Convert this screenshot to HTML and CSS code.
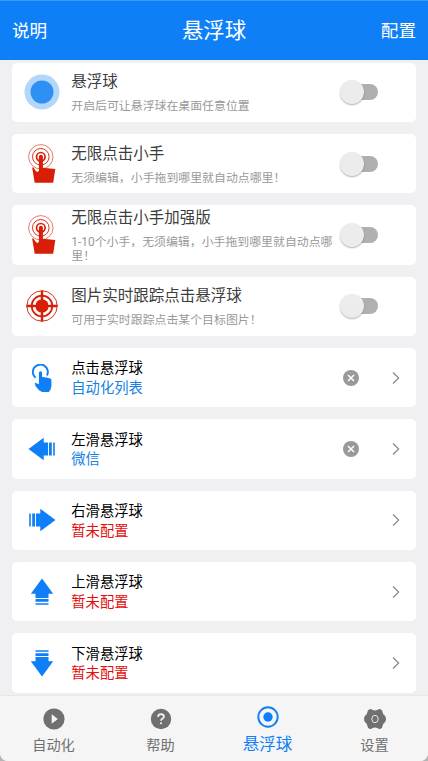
FILE: index.html
```html
<!DOCTYPE html>
<html lang="zh-CN">
<head>
<meta charset="utf-8">
<title>悬浮球</title>
<link rel="stylesheet" href="styles.css">
</head>
<body>
<svg class="defs" width="0" height="0">
  <symbol id="tap" viewBox="0 0 36 42">
    <g fill="none" stroke="#d81e06">
      <circle cx="16.800" cy="13.800" r="12.200" stroke-width=".6"/>
      <circle cx="16.800" cy="13.800" r="8.300" stroke-width=".9"/>
      <circle cx="16.800" cy="13.800" r="4.300" stroke-width="1.700"/>
    </g>
    <path d="M14.900 13.800a2 2 0 0 1 4 0V24.800L31.300 26 29.200 39.800H10.700L8.300 25.500q-.3-1.400 1-1.200l2 3q2.500 3.300 3.600.3z" fill="#d81e06"/>
  </symbol>
  <symbol id="arrow" viewBox="0 0 28 24">
    <path d="M.5 12 15.700 .8V5.500h4.300V18.500h-4.300v4.700zM21 5.500h2.800v13H21zM25.200 5.500h1.600v13h-1.600z" fill="#0e7ff7"/>
  </symbol>
  <symbol id="clear" viewBox="0 0 16 16">
    <circle cx="8" cy="8" r="8" fill="#999"/>
    <path d="M5 5l6 6M11 5l-6 6" stroke="#fff" stroke-width="1.500"/>
  </symbol>
  <symbol id="chevron" viewBox="0 0 8 12">
    <path d="M1 .5 6.700 6 1 11.500" fill="none" stroke="#888" stroke-width="1.200"/>
  </symbol>
</svg>
<div class="app">
  <header class="bar"><span class="side">说明</span><h1>悬浮球</h1><span class="side right">配置</span></header>
  <main class="list">
    <section class="card">
      <div class="icon"><svg width="36" height="36" viewBox="0 0 36 36"><circle cx="18" cy="18" r="17.500" fill="#b3d6fb"/><circle cx="18" cy="18" r="11.500" fill="#2e90f5"/></svg></div>
      <div class="text"><div class="title">悬浮球</div><div class="desc">开启后可让悬浮球在桌面任意位置</div></div>
      <div class="switch"></div>
    </section>
    <section class="card">
      <div class="icon"><svg width="36" height="42"><use href="#tap"/></svg></div>
      <div class="text"><div class="title">无限点击小手</div><div class="desc">无须编辑，小手拖到哪里就自动点哪里！</div></div>
      <div class="switch"></div>
    </section>
    <section class="card">
      <div class="icon"><svg width="36" height="42"><use href="#tap"/></svg></div>
      <div class="text"><div class="title">无限点击小手加强版</div><div class="desc">1-10个小手，无须编辑，小手拖到哪里就自动点哪里！</div></div>
      <div class="switch"></div>
    </section>
    <section class="card">
      <div class="icon"><svg width="32" height="32" viewBox="0 0 32 32">
        <g fill="none" stroke="#d81e06"><circle cx="16" cy="16" r="15.200" stroke-width=".9"/><circle cx="16" cy="16" r="10.300" stroke-width="1.800"/><path d="M16 .5v31M.5 16h31" stroke-width="2.400"/></g>
        <circle cx="16" cy="16" r="7.600" fill="#fff"/><circle cx="16" cy="16" r="6.700" fill="#d81e06"/><path d="M16 6v20M6 16h20" stroke="#d81e06" stroke-width="2.200"/></svg></div>
      <div class="text"><div class="title">图片实时跟踪点击悬浮球</div><div class="desc">可用于实时跟踪点击某个目标图片！</div></div>
      <div class="switch"></div>
    </section>
    <section class="card">
      <div class="icon"><svg width="20" height="28" viewBox="0 0 20 28"><path d="M3.500 13.800A7.500 7.500 0 1 1 15 11.500" fill="none" stroke="#0e7ff7" stroke-width="1.900"/><path d="M6.900 9q0-1.700 1.600-1.700T10.100 9v4.300l1.400-.6 1.500 1 1.600-.5 1.500 1.100 1.400-.3 1.900 1.500v6.500q-.1 3.800-2.500 6h-6.800Q6.300 26.500 3.500 22l-.8-3.600 4.200 1.800z" fill="#0e7ff7"/></svg></div>
      <div class="text"><div class="name">点击悬浮球</div><div class="value">自动化列表</div></div>
      <svg class="clear"><use href="#clear"/></svg><svg class="chevron"><use href="#chevron"/></svg>
    </section>
    <section class="card">
      <div class="icon"><svg class="arrow"><use href="#arrow"/></svg></div>
      <div class="text"><div class="name">左滑悬浮球</div><div class="value">微信</div></div>
      <svg class="clear"><use href="#clear"/></svg><svg class="chevron"><use href="#chevron"/></svg>
    </section>
    <section class="card">
      <div class="icon"><svg class="arrow to-right"><use href="#arrow"/></svg></div>
      <div class="text"><div class="name">右滑悬浮球</div><div class="value unset">暂未配置</div></div>
      <svg class="chevron"><use href="#chevron"/></svg>
    </section>
    <section class="card">
      <div class="icon"><svg class="arrow to-top"><use href="#arrow"/></svg></div>
      <div class="text"><div class="name">上滑悬浮球</div><div class="value unset">暂未配置</div></div>
      <svg class="chevron"><use href="#chevron"/></svg>
    </section>
    <section class="card">
      <div class="icon"><svg class="arrow to-bottom"><use href="#arrow"/></svg></div>
      <div class="text"><div class="name">下滑悬浮球</div><div class="value unset">暂未配置</div></div>
      <svg class="chevron"><use href="#chevron"/></svg>
    </section>
  </main>
  <nav class="tabs">
    <div class="tab"><svg width="22" height="22" viewBox="0 0 22 22"><circle cx="11" cy="11" r="10.600" fill="#707070"/><path d="M8.700 6.300v9.400l6.100-4.700z" fill="#f5f5f5"/></svg><span>自动化</span></div>
    <div class="tab"><svg width="22" height="22" viewBox="0 0 22 22"><circle cx="11" cy="11" r="10.200" fill="#707070"/><path d="M8 8.900q.2-2.700 3-2.700t2.900 2.400q0 1.300-1.600 2.200-1.300.8-1.300 2" fill="none" stroke="#f5f5f5" stroke-width="1.700"/><circle cx="11" cy="15.200" r="1.050" fill="#f5f5f5"/></svg><span>帮助</span></div>
    <div class="tab active"><svg width="22" height="22" viewBox="0 0 22 22"><circle cx="11" cy="11" r="9.700" fill="none" stroke="#0e7ff7" stroke-width="1.900"/><circle cx="11" cy="11" r="4.700" fill="#0e7ff7"/></svg><span>悬浮球</span></div>
    <div class="tab"><svg width="22" height="22" viewBox="0 0 22 22"><path d="M5.500 1.300Q7 .6 8.300 1.700q2.700 1.600 5.400 0Q15 .6 16.500 1.300 18.500 2 18.700 4.500q.3 1.900 2 3Q22 8.800 22 11t-1.300 3.500q-1.700 1.100-2 3-.2 2.500-2.200 3.200-1.500.7-2.800-.4-2.700-1.600-5.400 0-1.300 1.100-2.800.4-2-.7-2.200-3.200-.3-1.900-2-3Q0 13.200 0 11t1.300-3.500q1.700-1.100 2-3Q3.500 2 5.500 1.300z" fill="#707070"/><ellipse cx="11" cy="11" rx="3.200" ry="3.700" fill="none" stroke="#e8e8e8" stroke-width="1"/></svg><span>设置</span></div>
  </nav>
</div>
</body>
</html>
```

FILE: styles.css
```css
* { box-sizing: border-box; }
body {
  margin: 0;
  background: #b5b5b5;
  font-family: Roboto, "Noto Sans CJK SC", sans-serif;
}
.defs { display: block; }
.app {
  display: flex;
  flex-direction: column;
  height: 761px;
  overflow: hidden;
  background: #f0f0f3;
  border-radius: 0 0 8px 8px;
}
.bar {
  flex: none;
  display: flex;
  align-items: center;
  justify-content: space-between;
  height: 60px;
  padding: 0 12px 2px;
  color: #fff;
  background: #0e7ff7;
  border-top: 1px solid #359af9;
  font-family: "Noto Sans CJK SC", sans-serif;
}
.bar h1 { margin: 0; font-size: 21.400px; font-weight: 400; line-height: 28px; padding-bottom: 2px; }
.side { width: 80px; font-size: 17.600px; }
.right { text-align: right; }
.list {
  flex: 1;
  min-height: 0;
  overflow: hidden;
  display: flex;
  flex-direction: column;
  gap: 12px;
  padding: 2.600px 12px 0;
}
.card {
  flex: none;
  display: flex;
  align-items: center;
  height: 59.350px;
  padding-right: 16px;
  background: #fff;
  border-radius: 5px;
}
.icon { flex: none; display: flex; justify-content: center; width: 59.300px; }
.icon svg { display: block; }
.text { flex: 1; white-space: nowrap; }
.title { font-size: 15.500px; line-height: 22px; color: #3c3c3c; }
.desc {
  width: 264px;
  margin-top: 6px;
  font-size: 11.900px;
  line-height: 14px;
  color: #999;
  white-space: normal;
}
.name, .value { font-size: 14.300px; line-height: 19.500px; color: #000; }
.name { padding-top: 2.600px; }
.value { color: #1681e0; }
.value.unset { color: #e60d0d; }
.switch {
  position: relative;
  flex: none;
  width: 34px;
  height: 16px;
  margin-right: 22px;
  border-radius: 8px;
  background: #b0b0b0;
}
.switch::before {
  content: "";
  position: absolute;
  left: -4px;
  top: -4px;
  width: 24px;
  height: 24px;
  border-radius: 50%;
  background: #ececec;
  box-shadow: 0 1px 1.500px rgba(0, 0, 0, .3);
}
.clear { width: 16px; height: 16px; margin-right: 33px; }
.chevron { width: 8px; height: 12px; }
.arrow { width: 28px; height: 24px; }
.to-right { transform: rotate(180deg); }
.to-top { transform: rotate(90deg); }
.to-bottom { transform: rotate(-90deg); }
.tabs {
  flex: none;
  display: flex;
  height: 66px;
  background: #f5f5f5;
  border-top: 1.500px solid #e7e7e9;
}
.tab {
  flex: 1;
  display: flex;
  flex-direction: column;
  align-items: center;
  padding-top: 12px;
  font-size: 14.200px;
  line-height: 20px;
  color: #707070;
}
.tab span { margin-top: 5px; }
.active { padding-top: 9.500px; font-size: 16.500px; color: #0e7ff7; }
.active span { margin-top: 7px; }
```
